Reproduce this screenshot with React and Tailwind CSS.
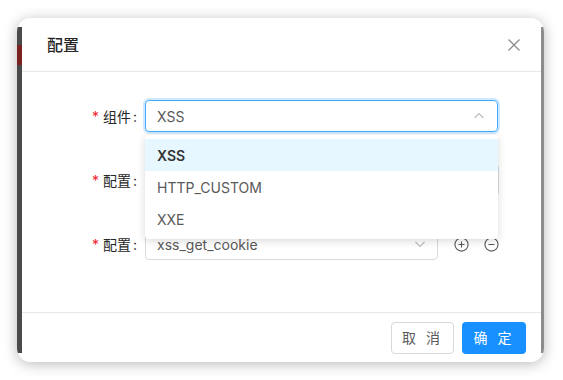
import React from "react";

const font = { fontFamily: 'Inter, "Noto Sans CJK SC", sans-serif' };

function ChevronUp() {
  return (
    <svg width="12" height="12" viewBox="0 0 12 12" fill="none" stroke="#bfbfbf" strokeWidth="1.2">
      <polyline points="1.5,8 6,3.5 10.5,8" />
    </svg>
  );
}
function ChevronDown() {
  return (
    <svg width="12" height="12" viewBox="0 0 12 12" fill="none" stroke="#bfbfbf" strokeWidth="1.2">
      <polyline points="1.5,4 6,8.5 10.5,4" />
    </svg>
  );
}
function PlusCircle() {
  return (
    <svg width="15" height="15" viewBox="0 0 16 16" fill="none" stroke="#595959" strokeWidth="1.2">
      <circle cx="8" cy="8" r="7" />
      <line x1="4.8" y1="8" x2="11.2" y2="8" />
      <line x1="8" y1="4.8" x2="8" y2="11.2" />
    </svg>
  );
}
function MinusCircle() {
  return (
    <svg width="15" height="15" viewBox="0 0 16 16" fill="none" stroke="#595959" strokeWidth="1.2">
      <circle cx="8" cy="8" r="7" />
      <line x1="4.8" y1="8" x2="11.2" y2="8" />
    </svg>
  );
}

function Label({ text }) {
  return (
    <div className="w-[123px] flex justify-end items-center pr-[8px] text-[14px] text-[#262626]">
      <span className="text-[#f5222d] mr-[4px] text-[14px]">*</span>
      <span>{text}</span>
      <span className="ml-[2px]">:</span>
    </div>
  );
}

export default function App() {
  return (
    <div className="w-[563px] h-[380px] bg-white pt-[18px] pl-[17px]" style={font}>
      <div className="w-[527px] h-[344px] rounded-[14px] overflow-hidden bg-white shadow-[0_2px_14px_rgba(0,0,0,0.28)] flex">
        <div className="w-[5px] mt-[9px] mb-[9px] bg-[#4a4a4a] flex flex-col">
          <div className="h-[18px]" />
          <div className="h-[20px] bg-[#7a2222]" />
        </div>
        <div className="flex-1 flex flex-col bg-white">
          <div className="h-[54px] border-b border-[#e8e8e8] flex items-center justify-between pl-[25px] pr-[20px]">
            <span className="text-[16px] font-medium text-[#262626]">配置</span>
            <svg width="14" height="14" viewBox="0 0 14 14" fill="none" stroke="#8c8c8c" strokeWidth="1.3">
              <line x1="1.5" y1="1.5" x2="12.5" y2="12.5" />
              <line x1="12.5" y1="1.5" x2="1.5" y2="12.5" />
            </svg>
          </div>
          <div className="h-[240px] relative pt-[28px] flex flex-col gap-[32px]">
            <div className="flex h-[32px]">
              <Label text="组件" />
              <div className="w-[353px] h-[32px] border border-[#40a9ff] rounded-[4px] shadow-[0_0_0_2px_rgba(24,144,255,0.2)] flex items-center justify-between pl-[11px] pr-[12px]">
                <span className="text-[14px] text-[#595959]">XSS</span>
                <ChevronUp />
              </div>
            </div>
            <div className="flex h-[32px]">
              <Label text="配置" />
              <div className="w-[354px] h-[32px] border border-[#d9d9d9] rounded-[4px]" />
            </div>
            <div className="flex h-[32px] items-center">
              <Label text="配置" />
              <div className="w-[293px] h-[32px] border border-[#d9d9d9] rounded-[4px] flex items-center justify-between pl-[11px] pr-[11px]">
                <span className="text-[14px] text-[#595959]">xss_get_cookie</span>
                <ChevronDown />
              </div>
              <div className="ml-[16px] flex items-center gap-[15px]">
                <PlusCircle />
                <MinusCircle />
              </div>
            </div>
            <div className="absolute left-[123px] top-[63px] w-[353px] py-[4px] bg-white rounded-[4px] shadow-[0_2px_8px_rgba(0,0,0,0.15)]">
              <div className="h-[32px] flex items-center pl-[12px] bg-[#e6f7ff] text-[14px] font-semibold text-[#333333]">XSS</div>
              <div className="h-[32px] flex items-center pl-[12px] text-[14px] text-[#595959]">HTTP_CUSTOM</div>
              <div className="h-[32px] flex items-center pl-[12px] text-[14px] text-[#595959]">XXE</div>
            </div>
          </div>
          <div className="h-[50px] border-t border-[#e8e8e8] flex items-center justify-end gap-[8px] pr-[15px]">
            <button className="w-[63px] h-[32px] rounded-[4px] border border-[#d9d9d9] bg-white text-[14px] text-[#595959] tracking-[3px]">取 消</button>
            <button className="w-[64px] h-[32px] rounded-[4px] bg-[#1890ff] text-[14px] text-white tracking-[3px]">确 定</button>
          </div>
        </div>
        <div className="w-[3px] mt-[9px] mb-[9px] bg-[#8c8c8c]" />
      </div>
    </div>
  );
}
